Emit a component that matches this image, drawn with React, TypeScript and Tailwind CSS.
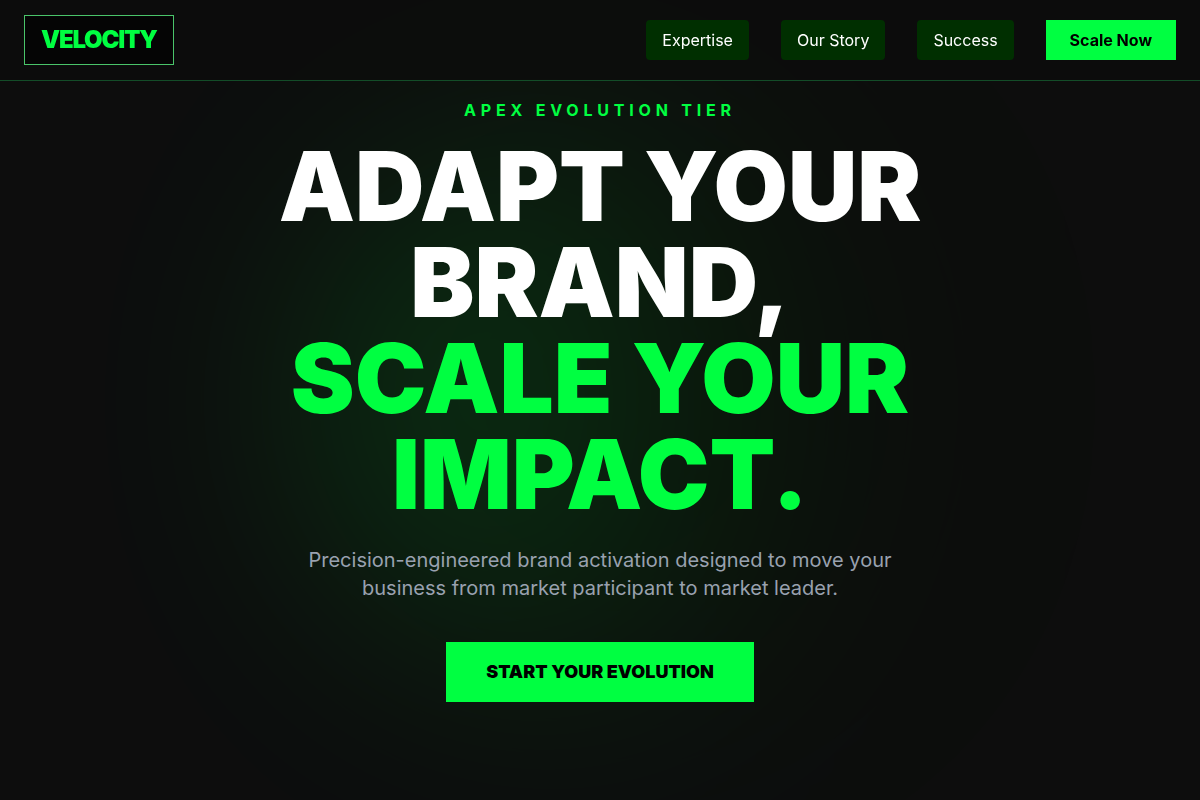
import React from 'react';

const navLinks = [
  { href: '#expertise', label: 'Expertise' },
  { href: '#story', label: 'Our Story' },
  { href: '#success', label: 'Success' },
];

function Navbar() {
  return (
    <nav className="fixed top-0 w-full z-10 flex items-center justify-between border-b border-[#22c55e]/35 bg-[#0d0d0d]/80 px-6 py-[15px]">
      <a href="#" className="border border-[#4ac46a] bg-[#050505] px-4 py-2 text-2xl font-black tracking-tighter text-[#00ff41]">
        VELOCITY
      </a>
      <div className="flex items-center gap-8">
        {navLinks.map((link) => (
          <a key={link.href} href={link.href} className="rounded bg-[#002f00] px-4 py-2 text-white">
            {link.label}
          </a>
        ))}
        <button className="bg-[#00ff41] px-6 py-2 font-bold text-black">Scale Now</button>
      </div>
    </nav>
  );
}

function Hero() {
  return (
    <section className="relative isolate flex min-h-screen flex-col items-center justify-center overflow-hidden px-6 text-center">
      {/* Glow behind the headline */}
      <div className="absolute inset-0 -z-10 flex items-center justify-center">
        <div className="size-[560px] shrink-0 rounded-full bg-linear-to-r from-[#00ff41] to-[#001a00] to-90% opacity-20 blur-[120px]" />
      </div>

      <p className="mb-4 font-bold uppercase tracking-[0.3em] text-[#00ff41]">Apex Evolution Tier</p>
      <h1 className="mb-6 max-w-4xl text-8xl leading-none font-black text-white">
        ADAPT YOUR
        <br />
        BRAND,
        <br />
        <span className="text-[#00ff41]">
          SCALE YOUR
          <br />
          IMPACT.
        </span>
      </h1>
      <p className="mb-10 max-w-2xl text-xl text-gray-400">
        Precision-engineered brand activation designed to move your business from market participant to market leader.
      </p>
      <button className="bg-[#00ff41] px-10 py-4 text-lg font-black text-black">START YOUR EVOLUTION</button>
    </section>
  );
}

export default function App() {
  return (
    <div className="min-h-screen bg-[#0d0d0d] font-['Inter',sans-serif]">
      <Navbar />
      <Hero />
    </div>
  );
}
